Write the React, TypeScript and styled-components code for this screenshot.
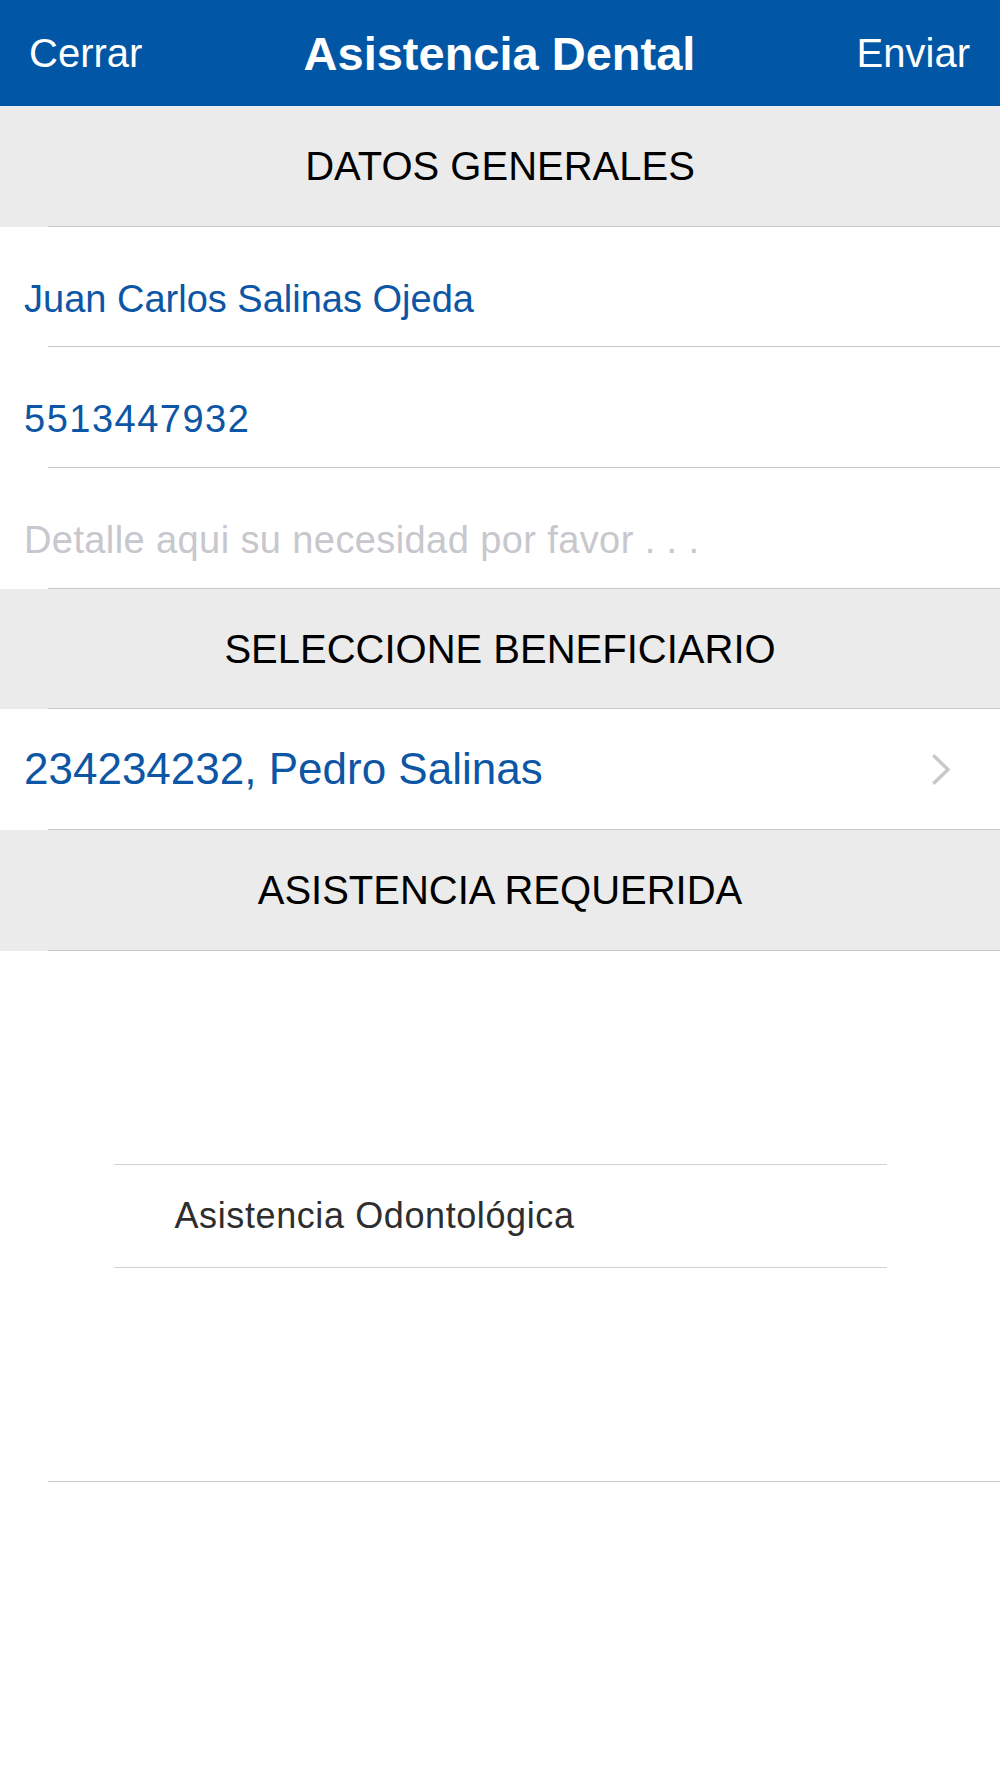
import React from 'react';
import styled, { createGlobalStyle } from 'styled-components';

const GlobalStyle = createGlobalStyle`
  html, body {
    margin: 0;
    padding: 0;
    background: #ffffff;
  }
  body {
    font-family: "Liberation Sans", Arial, Helvetica, sans-serif;
    -webkit-font-smoothing: antialiased;
  }
  * { box-sizing: border-box; }
`;

const Page = styled.div`
  width: 100%;
  min-height: 1778px;
  background: #ffffff;
  display: flex;
  flex-direction: column;
`;

const NavBar = styled.header`
  height: 106px;
  background: #0156a6;
  display: grid;
  grid-template-columns: 1fr auto 1fr;
  align-items: center;
  padding: 0 30px 0 29px;
  color: #ffffff;
`;

const NavButton = styled.span<{ $align: 'start' | 'end' }>`
  justify-self: ${(p) => p.$align};
  font-size: 40px;
  line-height: 40px;
`;

const NavTitle = styled.h1`
  margin: 0;
  font-size: 47px;
  line-height: 47px;
  font-weight: 700;
`;

const Cell = styled.div<{ $tone: 'gray' | 'white' }>`
  background: ${(p) => (p.$tone === 'gray' ? '#ebebeb' : '#ffffff')};
  display: flex;
  flex-direction: column;
`;

const Separator = styled.div`
  height: 1px;
  margin-left: 48px;
  background: #c8c7cc;
`;

const SectionTitle = styled.div`
  height: 119.7px;
  display: flex;
  align-items: center;
  justify-content: center;
  font-size: 40px;
  line-height: 40px;
  color: #000000;
`;

const FieldBody = styled.div<{ $placeholder?: boolean; $tracking?: number }>`
  height: 119.7px;
  display: flex;
  align-items: center;
  padding: 24px 24px 0 24px;
  font-size: 38px;
  line-height: 38px;
  letter-spacing: ${(p) => p.$tracking ?? 0}px;
  color: ${(p) => (p.$placeholder ? '#c7c7cd' : '#0c56a5')};
`;

const SelectBody = styled.div`
  height: 119.7px;
  display: flex;
  align-items: center;
  justify-content: space-between;
  padding: 0 49px 0 24px;
  font-size: 44px;
  line-height: 44px;
  color: #0c56a5;
`;

const PickerArea = styled.div`
  height: 530px;
  display: flex;
  align-items: center;
  justify-content: center;
  background: #ffffff;
`;

const PickerBand = styled.div`
  width: 773px;
  height: 104px;
  border-top: 1px solid #d2d2d4;
  border-bottom: 1px solid #d2d2d4;
  display: flex;
  align-items: center;
  padding-left: 61px;
  font-size: 36px;
  line-height: 36px;
  letter-spacing: 0.6px;
  color: #2e2e2e;
`;

const Chevron = () => (
  <svg width="19" height="31" viewBox="0 0 19 31" aria-hidden="true">
    <polyline
      points="2.5,2.5 16,15.5 2.5,28.5"
      fill="none"
      stroke="#c7c7cc"
      strokeWidth="3.4"
      strokeLinecap="square"
      strokeLinejoin="miter"
    />
  </svg>
);

export default function App() {
  return (
    <>
      <GlobalStyle />
      <Page>
        <NavBar>
          <NavButton $align="start">Cerrar</NavButton>
          <NavTitle>Asistencia Dental</NavTitle>
          <NavButton $align="end">Enviar</NavButton>
        </NavBar>

        <Cell $tone="gray">
          <SectionTitle>DATOS GENERALES</SectionTitle>
          <Separator />
        </Cell>
        <Cell $tone="white">
          <FieldBody>Juan Carlos Salinas Ojeda</FieldBody>
          <Separator />
        </Cell>
        <Cell $tone="white">
          <FieldBody $tracking={1.5}>5513447932</FieldBody>
          <Separator />
        </Cell>
        <Cell $tone="white">
          <FieldBody $placeholder $tracking={0.4}>
            Detalle aqui su necesidad por favor . . .
          </FieldBody>
          <Separator />
        </Cell>

        <Cell $tone="gray">
          <SectionTitle>SELECCIONE BENEFICIARIO</SectionTitle>
          <Separator />
        </Cell>
        <Cell $tone="white">
          <SelectBody>
            <span>234234232, Pedro Salinas</span>
            <Chevron />
          </SelectBody>
          <Separator />
        </Cell>

        <Cell $tone="gray">
          <SectionTitle>ASISTENCIA REQUERIDA</SectionTitle>
          <Separator />
        </Cell>
        <Cell $tone="white">
          <PickerArea>
            <PickerBand>Asistencia Odontológica</PickerBand>
          </PickerArea>
          <Separator />
        </Cell>
      </Page>
    </>
  );
}
